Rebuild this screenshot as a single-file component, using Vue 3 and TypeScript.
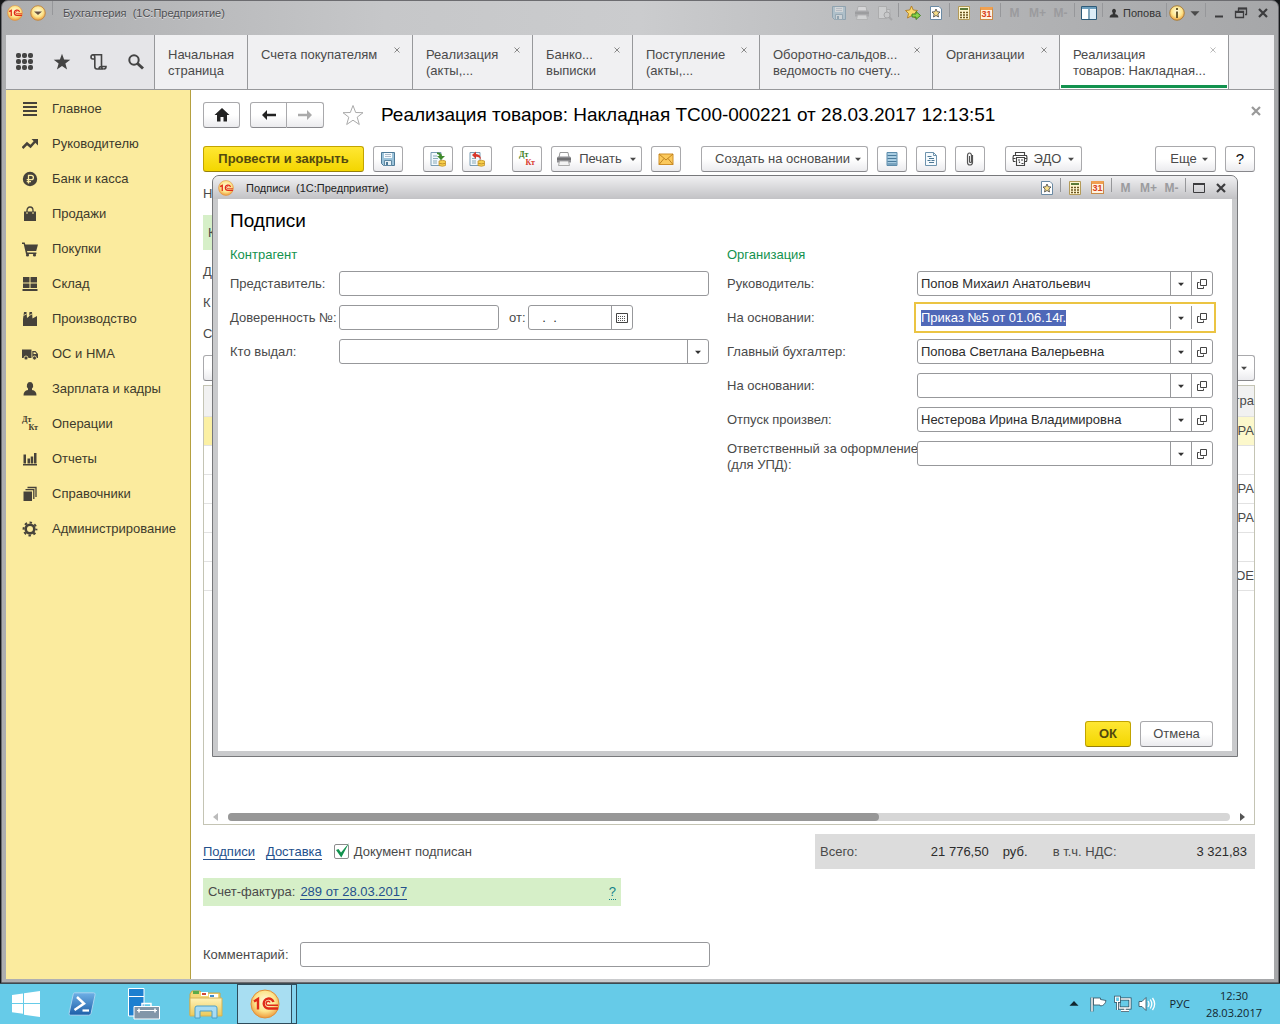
<script setup lang="ts">
import { onMounted, ref } from 'vue'

interface Tab {
  title: string[]
  width: number
  closable: boolean
  active?: boolean
}

interface Signer {
  id: string
  label: string[]
  value: string
  active?: boolean
}

const tabs: Tab[] = [
  { title: ['Начальная', 'страница'], width: 93, closable: false },
  { title: ['Счета покупателям'], width: 165, closable: true },
  { title: ['Реализация', '(акты,...'], width: 120, closable: true },
  { title: ['Банко...', 'выписки'], width: 100, closable: true },
  { title: ['Поступление', '(акты,...'], width: 127, closable: true },
  { title: ['Оборотно-сальдов...', 'ведомость по счету...'], width: 173, closable: true },
  { title: ['Организации'], width: 127, closable: true },
  { title: ['Реализация', 'товаров: Накладная...'], width: 170, closable: true, active: true },
]

const sections = [
  { icon: 'menu', title: 'Главное' },
  { icon: 'trend', title: 'Руководителю' },
  { icon: 'ruble', title: 'Банк и касса' },
  { icon: 'bag', title: 'Продажи' },
  { icon: 'cart', title: 'Покупки' },
  { icon: 'boxes', title: 'Склад' },
  { icon: 'factory', title: 'Производство' },
  { icon: 'truck', title: 'ОС и НМА' },
  { icon: 'person', title: 'Зарплата и кадры' },
  { icon: 'dtkt', title: 'Операции' },
  { icon: 'bars', title: 'Отчеты' },
  { icon: 'books', title: 'Справочники' },
  { icon: 'gear', title: 'Администрирование' },
]

const signers = ref<Signer[]>([
  { id: 'head', label: ['Руководитель:'], value: 'Попов Михаил Анатольевич' },
  { id: 'head-basis', label: ['На основании:'], value: 'Приказ №5 от 01.06.14г.', active: true },
  { id: 'accountant', label: ['Главный бухгалтер:'], value: 'Попова Светлана Валерьевна' },
  { id: 'accountant-basis', label: ['На основании:'], value: '' },
  { id: 'release', label: ['Отпуск произвел:'], value: 'Нестерова Ирина Владимировна' },
  { id: 'responsible', label: ['Ответственный за оформление', '(для УПД):'], value: '' },
])

const goods = ['РА', '', 'РА', 'КРА', '', 'ОЕ']
const signed = ref(true)

onMounted(() => {
  const field = document.getElementById('head-basis') as HTMLInputElement | null
  field?.focus()
  field?.select()
})
</script>

<template>
  <svg class="sprite" aria-hidden="true">
    <defs>
      <radialGradient id="gold" cx="50%" cy="40%" r="60%">
        <stop offset="0" stop-color="#fffbe0" />
        <stop offset="0.6" stop-color="#fde58c" />
        <stop offset="1" stop-color="#ee9a3c" />
      </radialGradient>
      <linearGradient id="shell" x1="0" y1="0" x2="0" y2="1">
        <stop offset="0" stop-color="#6fb0e6" />
        <stop offset="1" stop-color="#1d5ea8" />
      </linearGradient>
      <linearGradient id="folder" x1="0" y1="0" x2="0" y2="1">
        <stop offset="0" stop-color="#fff3b8" />
        <stop offset="1" stop-color="#ecc95a" />
      </linearGradient>
    </defs>
    <symbol id="i-onec" viewBox="0 0 30 30">
      <circle cx="15" cy="15" r="14" fill="url(#gold)" stroke="#e0903a" />
      <path d="M4 12.500l4-2.500v10.500M23.500 13a5 5 0 1 0-5 6.500h9.500" fill="none" stroke="#e02a18" stroke-width="2.400" />
      <path d="M20 13.500a2 2 0 1 0-1.500 2.800h9.500" fill="none" stroke="#e02a18" stroke-width="1.500" />
    </symbol>
    <symbol id="i-drop" viewBox="0 0 16 16">
      <circle cx="8" cy="8" r="7.300" fill="url(#gold)" stroke="#c08a48" />
      <path d="M4 6.500h8l-4 3.500z" fill="#665040" />
    </symbol>
    <symbol id="i-floppy" viewBox="0 0 16 16">
      <path d="M1.500 1.500h13v13h-11l-2-2z" fill="#9cc3da" stroke="#4f7b98" />
      <path d="M4 2h8v5H4z" fill="#f4fafd" />
      <path d="M5 3.500h6M5 5.500h6" stroke="#9ab" stroke-width="0.800" />
      <path d="M4.500 9.500h7v5h-7z" fill="#e7f1f6" stroke="#5f88a2" />
      <path d="M6 11h2v3H6z" fill="#4f7b98" />
    </symbol>
    <symbol id="i-print" viewBox="0 0 16 16">
      <path d="M4 1.500h8l1 5H3z" fill="#fff" stroke="#999" />
      <path d="M1 7q0-1.500 1.500-1.500h11Q15 5.500 15 7v4.500H1z" fill="#8c8c90" />
      <path d="M1 8h14" stroke="#555" />
      <path d="M3.500 10h9l1 4.500h-11z" fill="#f3f3f3" stroke="#999" stroke-width="0.800" />
    </symbol>
    <symbol id="i-preview" viewBox="0 0 16 16">
      <path d="M1.500 1.500h8v12h-8zM10 4.500h3v8" fill="#e8e8e8" stroke="#999" />
      <circle cx="10" cy="10" r="3" fill="#ddd" stroke="#888" />
      <path d="M12 12l3 3" stroke="#888" stroke-width="2" />
    </symbol>
    <symbol id="i-favadd" viewBox="0 0 16 16">
      <path d="M6.500 1l1.800 4 4.200.500-3 3 1 4.500-4-2.300-4 2.300 1-4.500-3-3 4.200-.500z" fill="#fbd96a" stroke="#b07a20" stroke-width="0.900" />
      <path d="M7 9h4V6.500l4.500 4-4.500 4V12H7z" fill="#8bd44a" stroke="#3a7d20" stroke-width="0.900" />
    </symbol>
    <symbol id="i-favpage" viewBox="0 0 16 16">
      <path d="M2.500 1.500h8.500l2.500 2.500v10.500h-11z" fill="#fff" stroke="#6a8aa4" />
      <path d="M8 4l1.200 2.700 2.800.300-2.100 2 .600 3L8 10.500 5.500 12l.6-3L4 7l2.800-.300z" fill="#f8df8a" stroke="#444" stroke-width="0.800" />
    </symbol>
    <symbol id="i-calc" viewBox="0 0 16 16">
      <path d="M2.500 1.500h11v13h-11z" fill="#fff6d0" stroke="#b39a58" />
      <path d="M4 3h8v2H4z" fill="#5a7a3a" />
      <path d="M4 7.500h8M4 10h8M4 12.500h8" stroke="#6b5520" stroke-width="1.400" stroke-dasharray="2 1" />
    </symbol>
    <symbol id="i-split" viewBox="0 0 16 16">
      <path d="M.5 1.500h15v13H.5z" fill="#fff" stroke="#2e5a78" />
      <path d="M1 2h14v2H1z" fill="#6da0bf" />
      <path d="M8 4v10" stroke="#5a88a4" stroke-width="1.500" />
      <path d="M9 4.500h6V14H9z" fill="#dcecf6" />
    </symbol>
    <symbol id="i-user" viewBox="0 0 16 16">
      <path d="M8 1a3.300 3.700 0 0 1 2 6.500V10q5 .5 5 5H1q0-4.500 5-5V7.500A3.300 3.700 0 0 1 8 1z" fill="currentColor" />
    </symbol>
    <symbol id="i-info" viewBox="0 0 16 16">
      <circle cx="8" cy="8" r="7.300" fill="url(#gold)" stroke="#a88040" />
      <path d="M7 6.500h2V13H7zM7 3h2v2H7z" fill="#6a5a30" />
    </symbol>
    <symbol id="i-min" viewBox="0 0 16 16"><path d="M4 11.500h8" stroke="currentColor" stroke-width="2" /></symbol>
    <symbol id="i-restore" viewBox="0 0 16 16">
      <path d="M5.500 6V3.500h8v6H12M2.500 6.500h8v6h-8z" fill="none" stroke="currentColor" stroke-width="1.300" />
      <path d="M5 3.500h9M2 7h9" stroke="currentColor" stroke-width="2" />
    </symbol>
    <symbol id="i-max" viewBox="0 0 16 16">
      <path d="M2.500 3.500h11v9h-11z" fill="none" stroke="currentColor" />
      <path d="M2 4h12" stroke="currentColor" stroke-width="2" />
    </symbol>
    <symbol id="i-close" viewBox="0 0 16 16"><path d="M4 4l8 8M12 4l-8 8" stroke="currentColor" stroke-width="2.200" /></symbol>
    <symbol id="i-x" viewBox="0 0 8 8"><path d="M1.500 1.500l5 5M6.500 1.500l-5 5" stroke="currentColor" /></symbol>
    <symbol id="i-arrow" viewBox="0 0 8 8"><path d="M1 2.800h6L4 6z" fill="currentColor" /></symbol>

    <symbol id="i-apps" viewBox="0 0 18 18">
      <g fill="currentColor">
        <rect v-for="n in 9" :key="n" :x="((n - 1) % 3) * 6" :y="Math.floor((n - 1) / 3) * 6" width="5" height="5" rx="2" />
      </g>
    </symbol>
    <symbol id="i-star" viewBox="0 0 18 18"><path d="M9 .8l2.100 5.800 6.200.200-4.900 3.800 1.700 5.900L9 13l-5.100 3.500 1.700-5.900L.7 6.800l6.200-.2z" fill="currentColor" /></symbol>
    <symbol id="i-history" viewBox="0 0 18 18">
      <path d="M4.500 6H2.800Q1 6 1 4t2-2.200h8.500V13q0 3 2.300 3H7q-2.200 0-2.200-2.500V4.500Q4.800 2 3 1.800M9 16q0-2.500 2.500-2.500H16q0 2.500-2 2.500" fill="none" stroke="currentColor" stroke-width="1.600" />
    </symbol>
    <symbol id="i-search" viewBox="0 0 18 18">
      <circle cx="7" cy="7" r="4.700" fill="none" stroke="currentColor" stroke-width="2" />
      <path d="M10.500 10.500l5.500 5" stroke="currentColor" stroke-width="3" />
    </symbol>

    <symbol id="i-menu" viewBox="0 0 16 16"><path d="M1 2h14M1 6h14M1 10h14M1 14h14" stroke="currentColor" stroke-width="2" /></symbol>
    <symbol id="i-trend" viewBox="0 0 16 16">
      <path d="M.5 12l4.500-4.500 3.500 3L13 5.500" fill="none" stroke="currentColor" stroke-width="2.500" />
      <path d="M9.500 3H16v6.500z" fill="currentColor" />
    </symbol>
    <symbol id="i-ruble" viewBox="0 0 16 16">
      <circle cx="8" cy="8" r="7.200" fill="currentColor" />
      <path d="M6.500 12.500V4.300h2.700a2.100 2.100 0 0 1 0 4.400H4.700M4.700 10.700h4.300" fill="none" stroke="#fbeb9e" stroke-width="1.300" />
    </symbol>
    <symbol id="i-bag" viewBox="0 0 16 16">
      <path d="M2 5.500h12V15H2z" fill="currentColor" />
      <path d="M5 8V4.500a3 3.500 0 0 1 6 0V8" fill="none" stroke="currentColor" stroke-width="1.300" />
      <path d="M5 6v2M11 6v2" stroke="#fbeb9e" />
    </symbol>
    <symbol id="i-cart" viewBox="0 0 16 16">
      <path d="M0 1.500h2.700l.6 2H16l-1.800 6.500H5l.4 1.500h9v1.500H4L1.700 3H0z" fill="currentColor" />
      <circle cx="5.500" cy="14" r="1.600" fill="currentColor" />
      <circle cx="12.500" cy="14" r="1.600" fill="currentColor" />
    </symbol>
    <symbol id="i-boxes" viewBox="0 0 16 16"><path d="M1 1h6.500v5.500H1zM8.500 1H15v5.500H8.500zM1 7.500h6.500V12H1zM8.500 7.500H15V12H8.500zM.5 13h15v2H.5z" fill="currentColor" /></symbol>
    <symbol id="i-factory" viewBox="0 0 16 16">
      <path d="M1 15V8L2 1h2.500l.5 6 2-1.500L7.500 1H10l.5 6.500L15 5v10z" fill="currentColor" />
      <path d="M1.500 4.500l3-1.500M7 4.500l3-1.500" stroke="#fbeb9e" stroke-width="0.800" />
    </symbol>
    <symbol id="i-truck" viewBox="0 0 16 16">
      <path d="M0 3.500h9.500V12H0zM10.300 5h3.200L16 8v4h-5.700z" fill="currentColor" />
      <path d="M11.500 6.200h1.700L14.500 8h-3z" fill="#fbeb9e" />
      <g fill="currentColor" stroke="#fbeb9e" stroke-width="0.800"><circle cx="4" cy="12" r="2" /><circle cx="12.500" cy="12" r="2" /></g>
    </symbol>
    <symbol id="i-person" viewBox="0 0 16 16"><path d="M8 1a3.200 3.600 0 0 1 2 6.400V9q4.500.5 4.500 5.500h-13Q1.500 9.500 6 9V7.400A3.200 3.600 0 0 1 8 1z" fill="currentColor" /></symbol>
    <symbol id="i-bars" viewBox="0 0 16 16"><path d="M1.500 3.500h2.500v9H1.500zM5.500 7.500H8v5H5.500zM8.700 5.500h2.500v7H8.700zM12 2h2.500v10.500H12zM1 13h14v1.500H1z" fill="currentColor" /></symbol>
    <symbol id="i-books" viewBox="0 0 16 16">
      <path d="M1.500 5.500h8.500v9.500H1.500z" fill="currentColor" />
      <path d="M3.500 3.700h8.300V13M5.500 1.500H14V11" fill="none" stroke="currentColor" stroke-width="1.300" />
    </symbol>
    <symbol id="i-gear" viewBox="0 0 16 16">
      <circle cx="8" cy="8" r="4.300" fill="none" stroke="currentColor" stroke-width="2.600" />
      <circle cx="8" cy="8" r="6.400" fill="none" stroke="currentColor" stroke-width="2" stroke-dasharray="2.500 2.526" stroke-dashoffset="1.200" />
    </symbol>

    <symbol id="i-home" viewBox="0 0 16 16"><path d="M8 1l7.500 7H13v6.500H9.500V10h-3v4.500H3V8H.5z" fill="currentColor" /></symbol>
    <symbol id="i-back" viewBox="0 0 16 16"><path d="M1 8l5-5v3.700h9v2.600H6V13z" fill="currentColor" /></symbol>
    <symbol id="i-forward" viewBox="0 0 16 16"><path d="M15 8l-5-5v3.700H1v2.600h9V13z" fill="currentColor" /></symbol>
    <symbol id="i-favorite" viewBox="0 0 22 22"><path d="M11 1.500l2.700 7 7.300.2-5.800 4.500 2.100 7.300L11 16.200l-6.300 4.300 2.100-7.300L1 8.700l7.300-.2z" fill="#fff" stroke="#aaa" /></symbol>
    <symbol id="i-post" viewBox="0 0 16 16">
      <path d="M1 1.500h10v13H1z" fill="#f2f8fc" stroke="#7b9db4" />
      <path d="M3 5h4M3 7.500h5M3 10h4M3 12h4" stroke="#8ab" />
      <path d="M7 1.500q4.500-.5 5 3.500H15l-4 4-4-4h2.500Q9 3 7 3z" fill="#3f8a2c" />
      <path d="M9 10q3.500-1.500 6.500 0v4.500q-3 1.500-6.500 0z" fill="#f6cf4c" stroke="#c4922a" stroke-width="0.800" />
      <path d="M9 12.300q3.500 1.200 6.500 0" fill="none" stroke="#c4922a" />
    </symbol>
    <symbol id="i-unpost" viewBox="0 0 16 16">
      <path d="M1 1.500h10v13H1z" fill="#f2f8fc" stroke="#7b9db4" />
      <path d="M3 7.500h4M3 10h4M3 12h4" stroke="#8ab" />
      <path d="M3 4l4-3.500V3q5 0 5 6-1.500-3.500-5-3.200V8z" fill="#d8372c" />
      <path d="M9 10q3.500-1.500 6.500 0v4.500q-3 1.500-6.500 0z" fill="#f6cf4c" stroke="#c4922a" stroke-width="0.800" />
      <path d="M9 12.300q3.500 1.200 6.500 0" fill="none" stroke="#c4922a" />
    </symbol>
    <symbol id="i-mail" viewBox="0 0 16 16">
      <path d="M1 3h14v10.500H1z" fill="#fbc95c" stroke="#cf8f28" />
      <path d="M1 3l7 6 7-6M1 13.500l5-6M15 13.500l-5-6" fill="none" stroke="#b97c1c" stroke-width="0.900" />
    </symbol>
    <symbol id="i-list" viewBox="0 0 16 16">
      <path d="M3 1.500h10v13H3z" fill="#a9cde2" stroke="#5d8cab" />
      <path d="M3.500 4.500h9M3.500 7.500h9M3.500 10.500h9M3.500 13h9" stroke="#4b7b9c" />
    </symbol>
    <symbol id="i-report" viewBox="0 0 16 16">
      <path d="M2.500 1.500h8l3 3v10h-11z" fill="#f5fafd" stroke="#6e93ad" />
      <path d="M10.500 1.500v3h3" fill="none" stroke="#6e93ad" />
      <path d="M4.500 5.500h4M6 7.500h5M4.500 9.500h3M8.500 9.500h3M6 11.500h5" stroke="#4d7895" />
    </symbol>
    <symbol id="i-clip" viewBox="0 0 16 16"><path d="M10.500 4v7.500a2.500 2.500 0 0 1-5 0V5q0-3 2-3t2 3v5.500q0 1-1 1t-1-1V5" fill="none" stroke="#555" stroke-width="1.200" /></symbol>
    <symbol id="i-edo" viewBox="0 0 16 16">
      <path d="M3.500 4V1.500h9V4M3.500 10.500h-2q-1-3 0-6h13q1 3 0 6h-2M1 7.500h2.500M12.500 7.500H15M4.500 6.500h8v8h-8z" fill="none" stroke="#444" stroke-width="1.100" />
      <path d="M6 9h2M9 9h2M7.500 12v-1.500M9.500 12.500h2" stroke="#444" stroke-width="1.200" />
    </symbol>
    <symbol id="i-date" viewBox="0 0 12 12">
      <path d="M.5 1.500h11v9H.5z" fill="none" stroke="#444" />
      <path d="M2 4.500h8M2 6.500h8M2 8.500h8" stroke="#555" stroke-dasharray="1 1" />
    </symbol>
    <symbol id="i-open" viewBox="0 0 10 10">
      <path d="M3.500.5h6v6h-6z" fill="none" stroke="#444" />
      <path d="M2.500 3.500h-2v6h6v-2" fill="none" stroke="#444" />
    </symbol>
    <symbol id="i-check" viewBox="0 0 16 16"><path d="M2 7l2.500-1L7 9.500 15 0 7.300 14.500z" fill="#12924e" /></symbol>

    <symbol id="i-windows" viewBox="0 0 28 26"><path d="M0 4l11-1.600V12H0zM12 2.200L28 0v12H12zM0 13h11v9.800L0 21.200zM12 13h16v13l-16-2.300z" fill="#fff" /></symbol>
    <symbol id="i-shell" viewBox="0 0 28 24">
      <path d="M6.500.8h19q2 0 1.600 2l-4 18.500q-.4 1.900-2.400 1.900h-18q-2 0-1.600-1.900l4-18.500Q5.300.8 6.500.8z" fill="url(#shell)" stroke="#a9d4f0" />
      <path d="M9 5l7 6.500-9.500 6.500" fill="none" stroke="#fff" stroke-width="2.500" />
      <path d="M14.500 18.500H21" stroke="#fff" stroke-width="2.200" />
    </symbol>
    <symbol id="i-server" viewBox="0 0 32 32">
      <path d="M.5.5H16V28H.5z" fill="#1c7fd0" stroke="#fff" />
      <path d="M1 8.500h15" stroke="#fff" />
      <path d="M14 18v-2.500h9V18" fill="none" stroke="#fff" stroke-width="1.500" />
      <path d="M6 18.500h25.500V31H6z" fill="#8296a8" stroke="#fff" />
      <path d="M9 22.500h20" stroke="#fff" />
      <path d="M11 20.500v4M27 20.500v4" stroke="#fff" stroke-width="1.500" />
    </symbol>
    <symbol id="i-explorer" viewBox="0 0 34 30">
      <path d="M1 5l2-3h8l2 2h18v22H1z" fill="#f4d878" stroke="#c9a648" />
      <path d="M4 2h6v3H4z" fill="#5bab4a" />
      <path d="M12 3h7v4h-7z" fill="#fff" /><path d="M13 4h4v2h-4z" fill="#d04a3a" />
      <path d="M20 5h9v4h-9z" fill="#fff" /><path d="M21 6h4v2h-4z" fill="#3f8ccc" />
      <path d="M1 9h32v18H1z" fill="url(#folder)" stroke="#d4b254" />
      <path d="M6 29V19q0-2 2-2h18q2 0 2 2v10h-5v-7H11v7z" fill="#a8dcf4" stroke="#4c9fc8" />
    </symbol>
    <symbol id="i-flag" viewBox="0 0 18 18"><path d="M2 2.500v14" stroke="#2d4c5c" stroke-width="3" /><path d="M3.500 3h7v1.500L16 5.500q-1 5-5.500 5.500l-.5-1H3.500z" fill="#fff" stroke="#2d4c5c" stroke-width="0.800" /><path d="M2 2.500v14" stroke="#fff" stroke-width="1.500" /></symbol>
    <symbol id="i-network" viewBox="0 0 18 18">
      <path d="M5 4h11v9H5zM7 15.500h8M11 13v2" fill="none" stroke="#2d4c5c" stroke-width="3" />
      <path d="M5 4h11v9H5zM7 15.500h8M11 13v2" fill="none" stroke="#fff" stroke-width="1.400" />
      <path d="M1.500 2h4v4.500h-4zM3.500 7v8" fill="none" stroke="#2d4c5c" stroke-width="2.600" />
      <path d="M1.500 2h4v4.500h-4zM3.500 7v8" fill="#66cbe8" stroke="#fff" stroke-width="1.200" />
    </symbol>
    <symbol id="i-sound" viewBox="0 0 18 18">
      <path d="M1 6.500h3l4-4v13l-4-4H1z" fill="#fff" stroke="#2d4c5c" stroke-width="0.800" />
      <path d="M10 6q2 3 0 6M12.300 4.500q3 4.500 0 9M14.500 3q4.300 6 0 12" fill="none" stroke="#fff" stroke-width="1.300" />
    </symbol>
  </svg>

  <div class="desktop">
    <div class="window">
      <header class="titlebar">
        <svg class="ic16"><use href="#i-onec" /></svg>
        <button class="bare first" aria-label="Меню"><svg class="ic16"><use href="#i-drop" /></svg></button>
        <span class="sep lead"></span>
        <span class="caption">Бухгалтерия&nbsp; (1С:Предприятие)</span>
        <div class="tools">
          <button v-for="i in ['floppy', 'print', 'preview']" :key="i" class="cell faded" :aria-label="i" disabled>
            <svg class="ic16"><use :href="'#i-' + i" /></svg>
          </button>
          <span class="sep"></span>
          <button v-for="i in ['favadd', 'favpage']" :key="i" class="cell" :aria-label="i"><svg class="ic16"><use :href="'#i-' + i" /></svg></button>
          <span class="sep"></span>
          <button class="cell" aria-label="Калькулятор"><svg class="ic16"><use href="#i-calc" /></svg></button>
          <button class="cell"><span class="calendar">31</span></button>
          <span class="sep"></span>
          <button v-for="m in ['M', 'M+', 'M-']" :key="m" class="cell memory" disabled>{{ m }}</button>
          <span class="sep"></span>
          <button class="cell" aria-label="Панели"><svg class="ic16"><use href="#i-split" /></svg></button>
          <span class="sep"></span>
          <button class="bare user"><svg class="ic10"><use href="#i-user" /></svg>Попова</button>
          <span class="sep"></span>
          <button class="bare info" aria-label="Справка"><svg class="ic16"><use href="#i-info" /></svg><svg class="ic12"><use href="#i-arrow" /></svg></button>
          <span class="sep"></span>
          <button v-for="i in ['min', 'restore', 'close']" :key="i" class="control" :aria-label="i"><svg class="ic16"><use :href="'#i-' + i" /></svg></button>
        </div>
      </header>

      <nav class="tabs">
        <div class="quick">
          <button v-for="i in ['apps', 'star', 'history', 'search']" :key="i" class="bare" :aria-label="i"><svg class="ic18"><use :href="'#i-' + i" /></svg></button>
        </div>
        <div v-for="(tab, n) in tabs" :key="n" class="tab" :class="{ active: tab.active }" :style="{ flexBasis: tab.width + 'px' }">
          <a href="#"><span v-for="line in tab.title" :key="line">{{ line }}</span></a>
          <button v-if="tab.closable" class="bare tab-close" aria-label="Закрыть"><svg class="ic8"><use href="#i-x" /></svg></button>
        </div>
      </nav>

      <div class="body">
        <aside class="sidebar">
          <a v-for="s in sections" :key="s.title" href="#">
            <span v-if="s.icon === 'dtkt'" class="dtkt"><b>Дт</b><b>Кт</b></span>
            <svg v-else class="ic16"><use :href="'#i-' + s.icon" /></svg>
            <span>{{ s.title }}</span>
          </a>
        </aside>

        <main class="main">
          <div class="heading">
            <button class="btn home" aria-label="Домой"><svg class="ic16"><use href="#i-home" /></svg></button>
            <div class="history">
              <button class="btn" aria-label="Назад"><svg class="ic16"><use href="#i-back" /></svg></button>
              <button class="btn" aria-label="Вперед" disabled><svg class="ic16"><use href="#i-forward" /></svg></button>
            </div>
            <button class="bare fav" aria-label="Избранное"><svg class="ic22"><use href="#i-favorite" /></svg></button>
            <h1>Реализация товаров: Накладная ТС00-000221 от 28.03.2017 12:13:51</h1>
            <button class="bare page-close" aria-label="Закрыть"><svg class="ic16"><use href="#i-close" /></svg></button>
          </div>

          <div class="toolbar">
            <div class="group">
              <button class="btn primary post">Провести и закрыть</button>
              <button class="btn square" aria-label="Записать"><svg class="ic16"><use href="#i-floppy" /></svg></button>
            </div>
            <div class="group">
              <button class="btn square" aria-label="Провести"><svg class="ic16"><use href="#i-post" /></svg></button>
              <button class="btn square" aria-label="Отмена проведения"><svg class="ic16"><use href="#i-unpost" /></svg></button>
            </div>
            <div class="group">
              <button class="btn square"><span class="dtkt colored"><b>Дт</b><b>Кт</b></span></button>
              <button class="btn print"><svg class="ic16"><use href="#i-print" /></svg>Печать<svg class="ic8"><use href="#i-arrow" /></svg></button>
              <button class="btn square" aria-label="Письмо"><svg class="ic16"><use href="#i-mail" /></svg></button>
            </div>
            <div class="group">
              <button class="btn create">Создать на основании<svg class="ic8"><use href="#i-arrow" /></svg></button>
              <button class="btn square" aria-label="Список"><svg class="ic16"><use href="#i-list" /></svg></button>
              <button class="btn square" aria-label="Отчет"><svg class="ic16"><use href="#i-report" /></svg></button>
              <button class="btn square" aria-label="Файлы"><svg class="ic16"><use href="#i-clip" /></svg></button>
            </div>
            <div class="group">
              <button class="btn edo"><svg class="ic16"><use href="#i-edo" /></svg>ЭДО<svg class="ic8"><use href="#i-arrow" /></svg></button>
            </div>
            <div class="group last">
              <button class="btn more">Еще<svg class="ic8"><use href="#i-arrow" /></svg></button>
              <button class="btn square help">?</button>
            </div>
          </div>

          <div class="doc-number">Н</div>
          <div class="doc-state">К</div>
          <div class="doc-fields">
            <div>Д</div>
            <div>К</div>
            <div>С</div>
          </div>
          <div class="doc-actions">
            <button class="btn square" aria-label="Добавить"></button>
            <button class="btn square drop" aria-label="Еще"><svg class="ic8"><use href="#i-arrow" /></svg></button>
          </div>

          <div class="grid">
            <table>
              <thead>
                <tr><th></th><th>тра</th></tr>
              </thead>
              <tbody>
                <tr v-for="(g, n) in goods" :key="n" :class="{ current: n === 0 }"><td></td><td>{{ g }}</td></tr>
              </tbody>
            </table>
            <div class="scroll">
              <i class="left"></i>
              <div class="track"><div class="thumb"></div></div>
              <i class="right"></i>
            </div>
          </div>

          <div class="summary">
            <a href="#" class="link">Подписи</a>
            <a href="#" class="link">Доставка</a>
            <label class="check">
              <span class="box"><input v-model="signed" type="checkbox" /><svg v-if="signed" class="ic16"><use href="#i-check" /></svg></span>
              Документ подписан
            </label>
            <div class="totals">
              <span>Всего:</span>
              <b class="sum">21 776,50</b>
              <b class="cur">руб.</b>
              <span>в т.ч. НДС:</span>
              <b class="vat">3 321,83</b>
            </div>
          </div>

          <div class="invoice">
            <span>Счет-фактура:</span>
            <a href="#" class="link">289 от 28.03.2017</a>
            <a href="#" class="hint">?</a>
          </div>

          <div class="comment">
            <label for="comment">Комментарий:</label>
            <input id="comment" class="field" type="text" />
          </div>

          <section class="dialog" role="dialog" aria-labelledby="dialog-title">
            <header class="dialog-bar">
              <svg class="ic16"><use href="#i-onec" /></svg>
              <span class="caption">Подписи&nbsp; (1С:Предприятие)</span>
              <div class="tools">
                <button class="cell" aria-label="В избранное"><svg class="ic16"><use href="#i-favpage" /></svg></button>
                <span class="sep"></span>
                <button class="cell" aria-label="Калькулятор"><svg class="ic16"><use href="#i-calc" /></svg></button>
                <button class="cell"><span class="calendar">31</span></button>
                <span class="sep"></span>
                <button v-for="m in ['M', 'M+', 'M-']" :key="m" class="cell memory" disabled>{{ m }}</button>
                <span class="sep"></span>
                <button v-for="i in ['max', 'close']" :key="i" class="control" :aria-label="i"><svg class="ic16"><use :href="'#i-' + i" /></svg></button>
              </div>
            </header>
            <form class="dialog-body" @submit.prevent>
              <h2 id="dialog-title">Подписи</h2>
              <div class="columns">
                <fieldset>
                  <legend>Контрагент</legend>
                  <div class="row party">
                    <label for="agent">Представитель:</label>
                    <input id="agent" class="field" type="text" />
                  </div>
                  <div class="row party">
                    <label for="proxy">Доверенность №:</label>
                    <div class="proxy">
                      <input id="proxy" class="field" type="text" />
                      <label for="proxy-date">от:</label>
                      <div class="combo date">
                        <input id="proxy-date" type="text" value="   .  ." />
                        <button type="button" aria-label="Календарь"><svg class="ic12"><use href="#i-date" /></svg></button>
                      </div>
                    </div>
                  </div>
                  <div class="row party">
                    <label for="issuer">Кто выдал:</label>
                    <div class="combo">
                      <input id="issuer" type="text" />
                      <button type="button" aria-label="Выбрать"><svg class="ic8"><use href="#i-arrow" /></svg></button>
                    </div>
                  </div>
                </fieldset>
                <fieldset>
                  <legend>Организация</legend>
                  <div v-for="s in signers" :key="s.id" class="row org">
                    <label :for="s.id"><span v-for="line in s.label" :key="line">{{ line }}</span></label>
                    <div class="combo" :class="{ active: s.active }">
                      <input :id="s.id" v-model="s.value" type="text" />
                      <button type="button" aria-label="Выбрать"><svg class="ic8"><use href="#i-arrow" /></svg></button>
                      <button type="button" aria-label="Открыть"><svg class="ic10"><use href="#i-open" /></svg></button>
                    </div>
                  </div>
                </fieldset>
              </div>
              <div class="actions">
                <button class="btn primary ok" type="submit">ОК</button>
                <button class="btn cancel" type="button">Отмена</button>
              </div>
            </form>
          </section>
        </main>
      </div>
    </div>

    <footer class="taskbar">
      <button class="task" aria-label="Пуск"><svg class="start"><use href="#i-windows" /></svg></button>
      <button class="task" aria-label="PowerShell"><svg class="shell"><use href="#i-shell" /></svg></button>
      <button class="task" aria-label="Диспетчер серверов"><svg class="server"><use href="#i-server" /></svg></button>
      <button class="task" aria-label="Проводник"><svg class="explorer"><use href="#i-explorer" /></svg></button>
      <button class="task running" aria-label="1С:Предприятие"><svg class="onec"><use href="#i-onec" /></svg></button>
      <span class="stack"></span>
      <div class="tray">
        <svg class="ic12 up"><use href="#i-arrow" /></svg>
        <svg class="ic18"><use href="#i-flag" /></svg>
        <svg class="ic18"><use href="#i-network" /></svg>
        <svg class="ic18"><use href="#i-sound" /></svg>
        <span class="lang">РУС</span>
        <div class="clock"><span>12:30</span><span>28.03.2017</span></div>
      </div>
    </footer>
  </div>
</template>

<style>
body {
  background: #15181a;
}
</style>

<style scoped>
.sprite {
  position: absolute;
  width: 0;
  height: 0;
}

.desktop {
  display: flex;
  flex-direction: column;
  min-height: 100vh;
  font-family: 'Liberation Sans', Arial, sans-serif;
  font-size: 13px;
  line-height: 16px;
  color: #4a4a4a;
}

button,
input {
  font: inherit;
  color: inherit;
}

a {
  color: inherit;
  text-decoration: none;
}

svg {
  flex: none;
}

.ic8 { width: 8px; height: 8px; }
.ic10 { width: 10px; height: 10px; }
.ic12 { width: 12px; height: 12px; }
.ic16 { width: 16px; height: 16px; }
.ic18 { width: 18px; height: 18px; }
.ic22 { width: 22px; height: 22px; }

.bare,
.cell,
.control {
  display: flex;
  align-items: center;
  justify-content: center;
  padding: 0;
  border: 0;
  background: none;
}

.calendar {
  width: 11px;
  border: 1px solid #c98a48;
  border-top: 3px solid #f0a050;
  background: #fff3e0;
  font-size: 9px;
  line-height: 9px;
  font-weight: bold;
  text-align: center;
  color: #d8401c;
}

.dtkt {
  display: flex;
  flex-direction: column;
  width: 16px;
  font-family: 'Liberation Serif', serif;
  font-size: 8px;
  line-height: 8px;
}

.dtkt b:first-child {
  align-self: flex-start;
}

.dtkt b:last-child {
  align-self: flex-end;
}

.colored b:first-child {
  color: #3a7d20;
}

.colored b:last-child {
  color: #d8372c;
}

/* Application window */
.window {
  flex: 1;
  display: flex;
  flex-direction: column;
  margin: 0 1px;
  padding: 0 4px 3px;
  border: 1px solid #6c6c70;
  border-radius: 7px 7px 0 0;
  background: linear-gradient(90deg, #acadaf, #c6c7c9 30%, #cbccce 50%, #b4b5b7 75%, #a6a7a9);
}

.titlebar {
  display: flex;
  align-items: center;
  height: 24px;
  padding: 0 0 10px 1px;
  font-size: 11px;
}

.first {
  margin-left: 7px;
}

.sep {
  width: 1px;
  height: 14px;
  margin: 0 2px;
  background: #96979a;
  align-self: flex-start;
}

.lead {
  margin: 0 10px 0 6px;
}

.titlebar .caption {
  color: #4e4f52;
  text-shadow: 0 1px 0 #dcdcde;
}

.tools {
  display: flex;
  align-items: center;
  margin-left: auto;
}

.cell {
  width: 23px;
  height: 20px;
}

.control {
  width: 22px;
  height: 20px;
  color: #3c3c3e;
}

.faded {
  opacity: 0.4;
}

.memory {
  font-weight: bold;
  font-size: 12px;
  color: #9b9b9e;
}

.user {
  gap: 4px;
  padding: 0 3px 0 4px;
  color: #333;
}

.info {
  gap: 4px;
  padding-right: 2px;
}

/* Open pages */
.tabs {
  display: flex;
  height: 54px;
  border-bottom: 1px solid #97989b;
  background: #f0f0f2;
}

.quick {
  flex: 0 0 148px;
  display: flex;
  align-items: center;
  gap: 19px;
  padding-left: 10px;
  box-sizing: border-box;
  background: #e5e5e8;
  color: #444;
}

.tab {
  position: relative;
  flex: 0 1 auto;
  min-width: 0;
  box-sizing: border-box;
  padding: 12px 0 0 13px;
  border-left: 1px solid #97989b;
  white-space: nowrap;
}

.tab:last-child {
  border-right: 1px solid #97989b;
}

.tab a {
  display: flex;
  flex-direction: column;
}

.tab.active {
  background: linear-gradient(#12924e, #12924e) 1px 50px / calc(100% - 2px) 3px no-repeat #fff;
}

.tab-close {
  position: absolute;
  top: 11px;
  right: 11px;
  color: #888;
}

.active .tab-close {
  color: #bbb;
}

.body {
  flex: 1;
  display: flex;
  background: #fff;
}

.sidebar {
  flex: 0 0 184px;
  border-right: 1px solid #b5a040;
  background: #fbeb9e;
  color: #3d3a2c;
  padding-top: 1px;
}

.sidebar a {
  display: flex;
  align-items: center;
  gap: 14px;
  height: 35px;
  padding-left: 16px;
}

.sidebar svg {
  color: #46423a;
}

/* Document page */
.main {
  position: relative;
  flex: 1;
  min-width: 0;
  display: flex;
  flex-direction: column;
  padding: 12px 19px 12px 12px;
}

.heading {
  display: flex;
  align-items: center;
  height: 26px;
}

.btn {
  display: flex;
  align-items: center;
  justify-content: center;
  height: 26px;
  padding: 0;
  box-sizing: border-box;
  border: 1px solid #a9a9ac;
  border-bottom-color: #88888c;
  border-radius: 3px;
  background: linear-gradient(#fff 50%, #ebebee);
  white-space: nowrap;
}

.primary {
  border-color: #c2a400;
  border-bottom-color: #96800a;
  background: linear-gradient(#ffe733, #f3d600);
  font-weight: bold;
  color: #53490e;
}

.home {
  width: 37px;
  color: #222;
}

.history {
  display: flex;
  margin-left: 10px;
}

.history .btn {
  width: 37px;
  color: #222;
}

.history .btn:first-child {
  border-radius: 3px 0 0 3px;
}

.history .btn:last-child {
  border-left: 0;
  border-radius: 0 3px 3px 0;
  color: #aaa;
}

.fav {
  margin: 0 17px 0 18px;
}

h1,
h2 {
  margin: 0;
  font-weight: normal;
  color: #000;
  white-space: nowrap;
}

h1 {
  font-size: 19px;
  line-height: 26px;
}

.page-close {
  margin: -8px -9px 0 auto;
  color: #999;
}

.toolbar {
  display: flex;
  gap: 20px;
  margin-top: 18px;
}

.group {
  display: flex;
  gap: 9px;
}

.last {
  margin-left: auto;
}

.square {
  width: 30px;
}

.post { width: 161px; }
.print { width: 91px; gap: 7px; }
.create { width: 167px; gap: 4px; padding-left: 8px; }
.edo { width: 77px; gap: 6px; }
.more { width: 61px; gap: 4px; padding-left: 8px; }
.help { color: #111; font-size: 15px; }

.doc-number {
  line-height: 43px;
}

.doc-state {
  width: 413px;
  padding-left: 5px;
  line-height: 35px;
  background: #d6efc8;
}

.doc-fields {
  margin: 6px 0;
  line-height: 31px;
}

.doc-actions {
  display: flex;
  justify-content: space-between;
  margin-bottom: 4px;
}

.drop {
  padding-left: 8px;
}

.grid {
  flex: 1;
  display: flex;
  flex-direction: column;
  min-height: 380px;
  border: 1px solid #c4c4b4;
}

table {
  width: 100%;
  border-collapse: collapse;
}

th,
td {
  height: 28px;
  padding: 0;
  border-bottom: 1px solid #e2e2e2;
  text-align: right;
  font-weight: normal;
}

th {
  height: 30px;
  background: #f1f1f1;
}

.current td {
  background: #fbf0a4;
}

.current td:first-child {
  width: 50%;
}

.current td:last-child {
  background: #fcf8cb;
}

.scroll {
  display: flex;
  align-items: center;
  gap: 10px;
  height: 14px;
  margin-top: auto;
  padding: 0 9px;
}

.scroll i {
  width: 0;
  height: 0;
  border: 4px solid transparent;
}

.scroll .left {
  border-left-width: 0;
  border-right: 5px solid #bbb;
}

.scroll .right {
  border-right-width: 0;
  border-left: 5px solid #555;
}

.track {
  flex: 1;
  border-radius: 4px;
  background: #d6d6d6;
}

.thumb {
  width: 65%;
  height: 8px;
  border-radius: 4px;
  background: #979797;
}

.summary {
  display: flex;
  align-items: center;
  gap: 11px;
  margin-top: 9px;
}

.link {
  color: #24508c;
  border-bottom: 1px solid #24508c;
  line-height: 15px;
}

.check {
  display: flex;
  align-items: center;
  gap: 5px;
}

.box {
  position: relative;
  display: flex;
}

.box input {
  appearance: none;
  width: 15px;
  height: 15px;
  margin: 0 0 0 1px;
  border: 1px solid #8c8c8c;
  border-radius: 2px;
  background: #fff;
}

.box svg {
  position: absolute;
  top: -1px;
  left: 1px;
}

.totals {
  flex: 0 0 440px;
  display: flex;
  align-items: center;
  height: 35px;
  margin-left: auto;
  padding: 0 8px 0 5px;
  box-sizing: border-box;
  background: #dcdcdc;
}

.totals b {
  font-weight: normal;
  color: #2c2c2c;
}

.sum {
  width: 131px;
  text-align: right;
}

.cur {
  width: 36px;
  padding: 0 14px;
}

.vat {
  margin-left: auto;
}

.invoice {
  display: flex;
  align-items: center;
  gap: 5px;
  width: 418px;
  height: 28px;
  margin-top: 9px;
  padding: 0 5px;
  box-sizing: border-box;
  background: #d6efc8;
}

.hint {
  margin-left: auto;
  border-bottom: 1px dotted #12808a;
  line-height: 14px;
  color: #12808a;
}

.comment {
  display: flex;
  align-items: center;
  margin-top: 36px;
}

.comment label {
  width: 97px;
}

.comment .field {
  width: 410px;
}

.field,
.combo {
  height: 25px;
  min-width: 0;
  box-sizing: border-box;
  border: 1px solid #97989b;
  border-radius: 3px;
  background: #fff;
  color: #2c2c2c;
}

.field {
  padding: 0 3px;
}

/* Signatures dialog */
.dialog {
  position: absolute;
  inset: 85px 36px 222px 21px;
  display: flex;
  flex-direction: column;
  min-height: 420px;
  padding: 0 5px 5px;
  border: 1px solid #77787b;
  border-radius: 7px 7px 0 0;
  background: #c9cacc;
}

.dialog-bar {
  display: flex;
  align-items: center;
  height: 23px;
  margin: 0 -5px;
  padding: 0 5px;
  border-radius: 6px 6px 0 0;
  background: linear-gradient(#f0f0f2, #c2c2c5);
  font-size: 11px;
  color: #222;
}

.dialog-bar > .caption {
  margin-left: 12px;
}

.dialog-body {
  flex: 1;
  display: flex;
  flex-direction: column;
  padding: 9px 19px 4px 12px;
  background: #fff;
}

h2 {
  font-size: 19px;
  line-height: 26px;
}

.columns {
  display: grid;
  grid-template-columns: 479fr 486fr;
  gap: 18px;
}

fieldset {
  min-width: 0;
  margin: 0;
  padding: 0;
  border: 0;
}

legend {
  padding: 13px 0 8px;
  color: #12924e;
}

.row {
  display: grid;
  align-items: start;
  height: 25px;
  margin-bottom: 9px;
}

.row > label {
  display: flex;
  flex-direction: column;
  justify-content: center;
  min-height: 25px;
  white-space: nowrap;
}

.party {
  grid-template-columns: 109px minmax(0, 1fr);
}

.org {
  grid-template-columns: 190px minmax(0, 1fr);
}

.proxy {
  display: flex;
  align-items: center;
}

.proxy .field {
  width: 160px;
  margin-right: 10px;
}

.proxy .date {
  width: 105px;
  margin-left: 2px;
}

.combo {
  display: flex;
}

.combo input {
  flex: 1;
  min-width: 0;
  padding: 0 3px;
  border: 0;
  outline: 0;
  background: none;
  line-height: 16px;
}

.combo input::selection {
  background: #4f68b8;
  color: #fff;
}

.combo button {
  display: flex;
  align-items: center;
  justify-content: center;
  width: 21px;
  box-sizing: border-box;
  padding: 0;
  border: 0;
  border-left: 1px solid #97989b;
  background: none;
  color: #333;
}

.combo.active {
  border-color: transparent;
  border-radius: 0;
  outline: 2px solid #ebc443;
  outline-offset: 1px;
}

.actions {
  display: flex;
  justify-content: flex-end;
  gap: 9px;
  margin-top: auto;
}

.ok { width: 46px; }
.cancel { width: 73px; }

/* Taskbar */
.taskbar {
  display: flex;
  height: 40px;
  border-top: 1px solid #3d4a50;
  background: #66cbe8;
  font-family: 'Open Sans', 'Noto Sans', sans-serif;
  font-size: 11px;
  color: #12262e;
}

.task {
  display: flex;
  align-items: center;
  justify-content: center;
  width: 62px;
  padding: 0;
  border: 0;
  background: none;
}

.task:first-child {
  width: 51px;
}

.running {
  box-sizing: border-box;
  width: 55px;
  border: 1px solid #2d4c5c;
  background: #a8def2;
}

.stack {
  width: 4px;
  border: 1px solid #2d4c5c;
  border-left: 0;
  background: #86d4ee;
}

.start { width: 28px; height: 26px; }
.shell { width: 28px; height: 24px; }
.server { width: 32px; height: 32px; }
.explorer { width: 34px; height: 30px; }
.onec { width: 30px; height: 30px; }

.tray {
  display: flex;
  align-items: center;
  gap: 6px;
  margin-left: auto;
  padding-right: 18px;
}

.up {
  transform: rotate(180deg);
  margin-right: 4px;
}

.lang {
  margin: 0 10px 0 8px;
}

.clock {
  display: flex;
  flex-direction: column;
  align-items: center;
  line-height: 17px;
}
</style>
